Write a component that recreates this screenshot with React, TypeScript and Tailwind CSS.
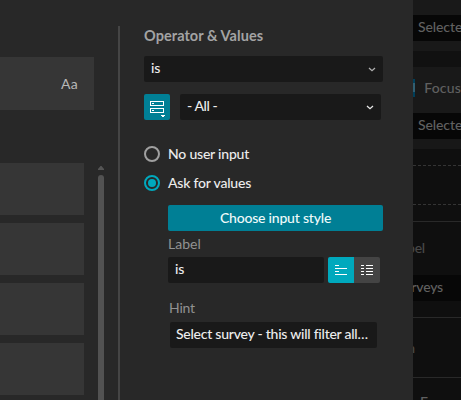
import type { ReactNode } from 'react'

const listRows = [0, 1, 2, 3]

function Chevron({ className }: { className: string }) {
  return (
    <svg className={className} width="8" height="5" viewBox="0 0 8 5" fill="none" stroke="currentColor" strokeWidth="1.3">
      <path d="M1 1 L4 3.7 L7 1" />
    </svg>
  )
}

function SourceIcon() {
  return (
    <svg width="26" height="26" viewBox="0 0 26 26" fill="none" shapeRendering="crispEdges">
      <rect x="6.5" y="7.5" width="13" height="4" stroke="#fff" />
      <rect x="6.5" y="14.5" width="13" height="4" stroke="#fff" />
      <path d="M8 9h2v1h-2z M8 16h2v1h-2z M17 21h4v1h-4z M18 22h2v1h-2z" fill="#fff" />
    </svg>
  )
}

function Radio({ checked, children }: { checked?: boolean; children: ReactNode }) {
  return (
    <label className="flex h-4 items-center gap-2">
      <span
        className={[
          'flex h-4 w-4 items-center justify-center rounded-full border-2',
          checked ? 'border-[#00a9bd]' : 'border-[#a0a0a0]',
        ].join(' ')}
      >
        {checked && <span className="h-2 w-2 rounded-full bg-[#00a9bd]" />}
      </span>
      <span className="h-4 leading-[15px] whitespace-nowrap text-[#ececec]">{children}</span>
    </label>
  )
}

function FieldList() {
  return (
    <div className="flex h-full w-[118px] shrink-0 flex-col pt-[57px]">
      <div className="flex h-[53px] w-[94px] shrink-0 items-center justify-end bg-[#363636] pr-4">
        <span className="h-5 text-[14px] leading-[19px] font-normal tracking-[0.3px] text-[#b8b8b8]">Aa</span>
      </div>
      <div className="mt-[53px] flex flex-1">
        <div className="flex w-[84px] flex-col gap-2">
          {listRows.map(i => (
            <div key={i} className="h-[52px] shrink-0 bg-[#363636]" />
          ))}
        </div>
        {/* Scrollbar */}
        <div className="ml-[14px] flex w-[6px] flex-col pt-[3px]">
          <svg className="shrink-0" width="6" height="4" viewBox="0 0 6 4">
            <path d="M0 4 V3 L2.5 0 H3.5 L6 3 V4 Z" fill="#555" />
          </svg>
          <div className="mt-[5px] flex-1 rounded-t-full bg-[#525252]" />
        </div>
      </div>
    </div>
  )
}

function Operators() {
  return (
    <div className="flex w-[239px] flex-col">
      <h3 className="h-5 whitespace-nowrap text-[14.5px] leading-5 font-bold tracking-[0.06px] text-[#a3a3a3]">Operator &amp; Values</h3>

      <div className="mt-[10px] flex h-[26px] items-center justify-between rounded-xs bg-[#191919] pr-[7px] pl-[7px]">
        <span className="h-5 leading-[18px]">is</span>
        <Chevron className="text-[#b0b0b0]" />
      </div>

      <div className="mt-3 flex gap-[10px]">
        <button className="h-[26px] w-[26px] rounded-xs bg-[#007f95]">
          <SourceIcon />
        </button>
        <div className="flex h-[26px] w-[201px] items-center justify-between rounded-xs bg-[#191919] pr-[7px] pl-[7px]">
          <span className="h-5 leading-[17px] tracking-[-0.4px]">- All -</span>
          <Chevron className="text-[#e8e8e8]" />
        </div>
      </div>

      <div className="mt-[26px] flex flex-col gap-[13px]">
        <Radio>No user input</Radio>
        <Radio checked>Ask for values</Radio>
      </div>

      {/* Input options */}
      <div className="mt-[14px] flex flex-col pl-6">
        <button className="h-[26px] rounded-xs bg-[#007f95] pb-px leading-[25px] text-[#eefafa]">Choose input style</button>
        <span className="h-[26px] font-normal leading-[25px] tracking-normal text-[#929292]">Label</span>
        <div className="flex gap-1">
          <div className="h-[26px] w-[156px] rounded-xs bg-[#191919] px-[7px] leading-[24px]">is</div>
          <div className="flex overflow-hidden rounded-xs">
            <button className="h-[26px] w-[26px] bg-[#00a9bd]">
              <svg width="26" height="26" viewBox="0 0 26 26" shapeRendering="crispEdges">
                <path d="M7 8h4v1h-4z M7 11h12v1h-12z M7 14h4v1h-4z M7 17h12v1h-12z" fill="#fff" />
              </svg>
            </button>
            <button className="h-[26px] w-[26px] bg-[#444]">
              <svg width="26" height="26" viewBox="0 0 26 26" shapeRendering="crispEdges">
                <path
                  d="M7 8h3v1h-3z M12 8h7v1h-7z M7 11h3v1h-3z M12 11h7v1h-7z M7 14h3v1h-3z M12 14h7v1h-7z M7 17h3v1h-3z M12 17h7v1h-7z"
                  fill="#fff"
                />
              </svg>
            </button>
          </div>
        </div>
        <span className="mt-3 ml-px h-[27px] font-normal leading-[26px] text-[#929292]">Hint</span>
        <div className="ml-[2px] h-[26px] w-[207px] rounded-xs bg-[#191919] px-[6px] leading-[24px] tracking-[-0.24px] whitespace-nowrap">
          Select survey - this will filter all…
        </div>
      </div>
    </div>
  )
}

// Dimmed page that shows to the right of the dialog
function Backdrop() {
  return (
    <div className="flex h-full flex-1 flex-col overflow-hidden bg-[#0f0f0f] text-[#606060]">
      <div className="h-[15px] shrink-0 bg-[#191919]" />
      <div className="h-[26px] shrink-0 bg-[#070707] pl-[5px] leading-[24px] tracking-[-0.1px] whitespace-nowrap">Selected</div>
      <div className="h-[10px] shrink-0 bg-[#191919]" />
      <div className="h-4 shrink-0 bg-[#111]" />
      <div className="flex h-[46px] shrink-0 items-start bg-[#191919] pt-3">
        <div className="h-[18px] w-[5px] overflow-hidden bg-[#003f5a]">
          <div className="mt-1 h-[9px] w-[2px] bg-[#315f72]" />
        </div>
        <span className="pl-[9px] leading-[17px] tracking-[0.2px]">Focus</span>
      </div>
      <div className="h-[26px] shrink-0 bg-[#070707] pl-[5px] leading-[24px] tracking-[-0.1px] whitespace-nowrap">Selected</div>
      <div className="h-[10px] shrink-0 bg-[#181818]" />
      <div className="mt-4 h-10 shrink-0 border-y border-dashed border-[#343434]" />
      <div className="mt-4 h-px shrink-0 bg-[#292929]" />
      <div className="flex h-[53px] w-3 shrink-0 items-center justify-end pb-[2px] text-[#484848]">Label</div>
      <div className="flex h-[26px] shrink-0 bg-[#070707]">
        <div className="flex h-[23px] w-[30px] items-center justify-end">Surveys</div>
      </div>
      <div className="mt-4 h-px shrink-0 bg-[#292929]" />
      <div className="flex h-[59px] w-[2px] shrink-0 items-center justify-end pb-px text-[#484848]">In</div>
      <div className="h-px shrink-0 bg-[#292929]" />
      <div className="mt-[14px] h-5 shrink-0 pl-[7px] leading-5 tracking-[0.3px] whitespace-nowrap">Focus</div>
    </div>
  )
}

export default function App() {
  return (
    <div className="flex h-[400px] w-[461px] overflow-hidden bg-[#282828] font-['Lato',sans-serif] text-[14px] font-medium tracking-[-0.2px] text-[#ededed]">
      {/* z-10 keeps the backdrop's clipped labels under the dialog */}
      <div className="relative z-10 flex h-full w-[413px] shrink-0 bg-[#282828]">
        <FieldList />
        <div className="flex flex-1 pt-[26px]">
          <div className="w-[2px] bg-[#454545]" />
          <div className="pl-6">
            <Operators />
          </div>
        </div>
      </div>
      <Backdrop />
    </div>
  )
}
